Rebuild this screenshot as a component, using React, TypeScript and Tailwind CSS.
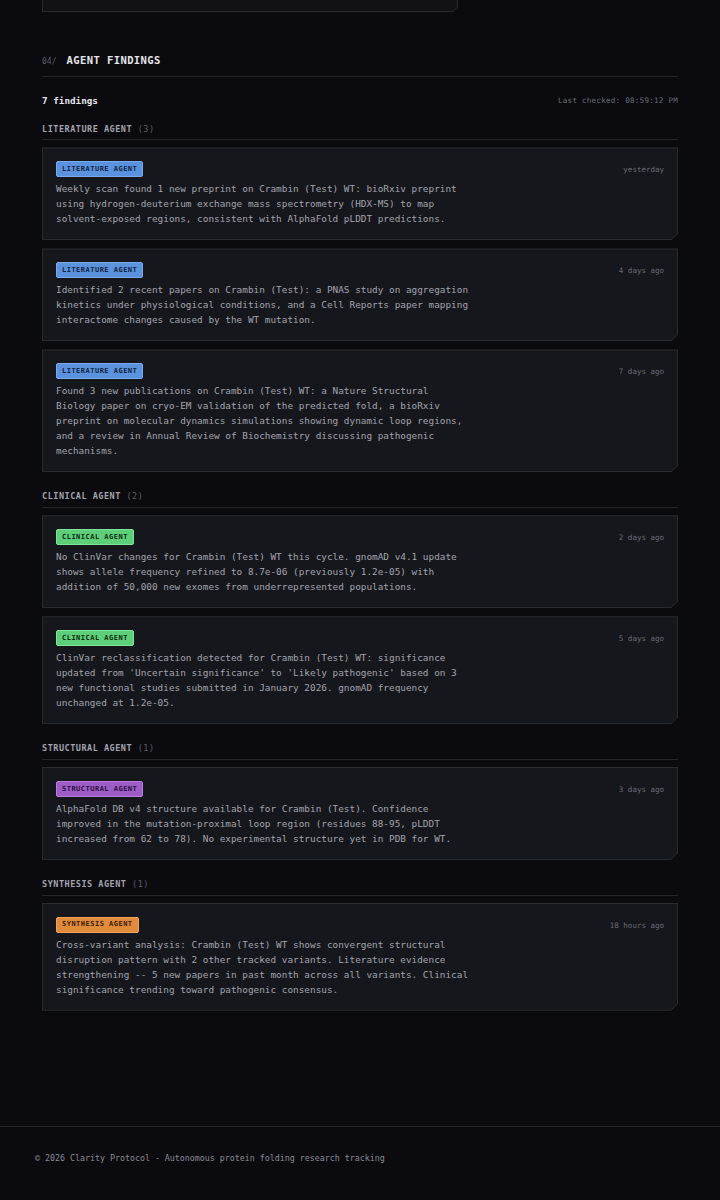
import React from "react";

const mono = { fontFamily: '"DejaVu Sans Mono", "Liberation Mono", monospace' };

type Finding = { agent: string; time: string; text: string[] };

const badgeCls: Record<string, string> = {
  LITERATURE: "bg-[#5b92dd] border-[#7aaaf0] text-[#0f2240]",
  CLINICAL: "bg-[#5ccf78] border-[#80e59a] text-[#0b2a14]",
  STRUCTURAL: "bg-[#9d5cc6] border-[#b87ddf] text-[#2a0f3a]",
  SYNTHESIS: "bg-[#e08a3c] border-[#f0a45e] text-[#3a1c05]",
};

const groups: { key: string; name: string; items: Finding[] }[] = [
  {
    key: "LITERATURE",
    name: "LITERATURE AGENT",
    items: [
      {
        agent: "LITERATURE AGENT",
        time: "yesterday",
        text: [
          "Weekly scan found 1 new preprint on Crambin (Test) WT: bioRxiv preprint",
          "using hydrogen-deuterium exchange mass spectrometry (HDX-MS) to map",
          "solvent-exposed regions, consistent with AlphaFold pLDDT predictions.",
        ],
      },
      {
        agent: "LITERATURE AGENT",
        time: "4 days ago",
        text: [
          "Identified 2 recent papers on Crambin (Test): a PNAS study on aggregation",
          "kinetics under physiological conditions, and a Cell Reports paper mapping",
          "interactome changes caused by the WT mutation.",
        ],
      },
      {
        agent: "LITERATURE AGENT",
        time: "7 days ago",
        text: [
          "Found 3 new publications on Crambin (Test) WT: a Nature Structural",
          "Biology paper on cryo-EM validation of the predicted fold, a bioRxiv",
          "preprint on molecular dynamics simulations showing dynamic loop regions,",
          "and a review in Annual Review of Biochemistry discussing pathogenic",
          "mechanisms.",
        ],
      },
    ],
  },
  {
    key: "CLINICAL",
    name: "CLINICAL AGENT",
    items: [
      {
        agent: "CLINICAL AGENT",
        time: "2 days ago",
        text: [
          "No ClinVar changes for Crambin (Test) WT this cycle. gnomAD v4.1 update",
          "shows allele frequency refined to 8.7e-06 (previously 1.2e-05) with",
          "addition of 50,000 new exomes from underrepresented populations.",
        ],
      },
      {
        agent: "CLINICAL AGENT",
        time: "5 days ago",
        text: [
          "ClinVar reclassification detected for Crambin (Test) WT: significance",
          "updated from 'Uncertain significance' to 'Likely pathogenic' based on 3",
          "new functional studies submitted in January 2026. gnomAD frequency",
          "unchanged at 1.2e-05.",
        ],
      },
    ],
  },
  {
    key: "STRUCTURAL",
    name: "STRUCTURAL AGENT",
    items: [
      {
        agent: "STRUCTURAL AGENT",
        time: "3 days ago",
        text: [
          "AlphaFold DB v4 structure available for Crambin (Test). Confidence",
          "improved in the mutation-proximal loop region (residues 88-95, pLDDT",
          "increased from 62 to 78). No experimental structure yet in PDB for WT.",
        ],
      },
    ],
  },
  {
    key: "SYNTHESIS",
    name: "SYNTHESIS AGENT",
    items: [
      {
        agent: "SYNTHESIS AGENT",
        time: "18 hours ago",
        text: [
          "Cross-variant analysis: Crambin (Test) WT shows convergent structural",
          "disruption pattern with 2 other tracked variants. Literature evidence",
          "strengthening -- 5 new papers in past month across all variants. Clinical",
          "significance trending toward pathogenic consensus.",
        ],
      },
    ],
  },
];

function Card({ f, k }: { f: Finding; k: string }) {
  return (
    <div className="bg-[#2a2b31] p-px [clip-path:polygon(0_0,100%_0,100%_calc(100%-7px),calc(100%-7px)_100%,0_100%)]">
      <div className="bg-[#16171c] px-[13px] pt-[13px] pb-[13px] [clip-path:polygon(0_0,100%_0,100%_calc(100%-6px),calc(100%-6px)_100%,0_100%)]">
        <div className="flex items-start justify-between">
          <span
            className={`inline-flex h-[16px] items-center rounded-[2px] border px-[5px] text-[7px] font-bold tracking-[0.07em] ${badgeCls[k]}`}
          >
            {f.agent}
          </span>
          <span className="pt-[3px] text-[7.5px] text-[#6b6c75]">{f.time}</span>
        </div>
        <div className="mt-[4px] text-[9.4px] leading-[15px] text-[#a3a4ad]">
          {f.text.map((l, i) => (
            <div key={i}>{l}</div>
          ))}
        </div>
      </div>
    </div>
  );
}

export default function App() {
  return (
    <div className="min-h-[1200px] bg-[#0a0a0f] flex flex-col" style={mono}>
      <div className="px-[42px]">
        <div className="w-[416px] h-[12px] bg-[#2a2b31] px-px pb-px [clip-path:polygon(0_0,100%_0,100%_calc(100%-5px),calc(100%-5px)_100%,0_100%)]">
          <div className="h-full bg-[#111116] [clip-path:polygon(0_0,100%_0,100%_calc(100%-4px),calc(100%-4px)_100%,0_100%)]" />
        </div>

        <div className="mt-[41px] flex items-baseline gap-[10px] border-b border-[#24252b] pb-[7px]">
          <span className="text-[8px] text-[#5e5f68]">04/</span>
          <span className="text-[10.5px] font-bold tracking-[0.04em] text-[#e6e6ea]">AGENT FINDINGS</span>
        </div>

        <div className="mt-[17px] flex items-center justify-between">
          <span className="text-[9.3px] font-bold text-[#e6e6ea]">7 findings</span>
          <span className="text-[7.6px] tracking-[0.03em] text-[#6b6c75]">Last checked: 08:59:12 PM</span>
        </div>

        <div className="mt-[15px] flex flex-col gap-[18px]">
          {groups.map((g) => (
            <div key={g.key}>
              <div className="border-b border-[#24252b] pb-[4px] text-[8.5px] font-bold tracking-[0.06em] text-[#a3a4ad]">
                {g.name} <span className="font-normal text-[#5e5f68]">({g.items.length})</span>
              </div>
              <div className="mt-[7px] flex flex-col gap-[8px]">
                {g.items.map((f, i) => (
                  <Card key={i} f={f} k={g.key} />
                ))}
              </div>
            </div>
          ))}
        </div>
      </div>

      <div className="mt-[115px] border-t border-[#24252b] px-[35px] pt-[17px] pb-[34px]">
        <span className="text-[8.3px] text-[#8a8b94]">© 2026 Clarity Protocol - Autonomous protein folding research tracking</span>
      </div>
    </div>
  );
}
